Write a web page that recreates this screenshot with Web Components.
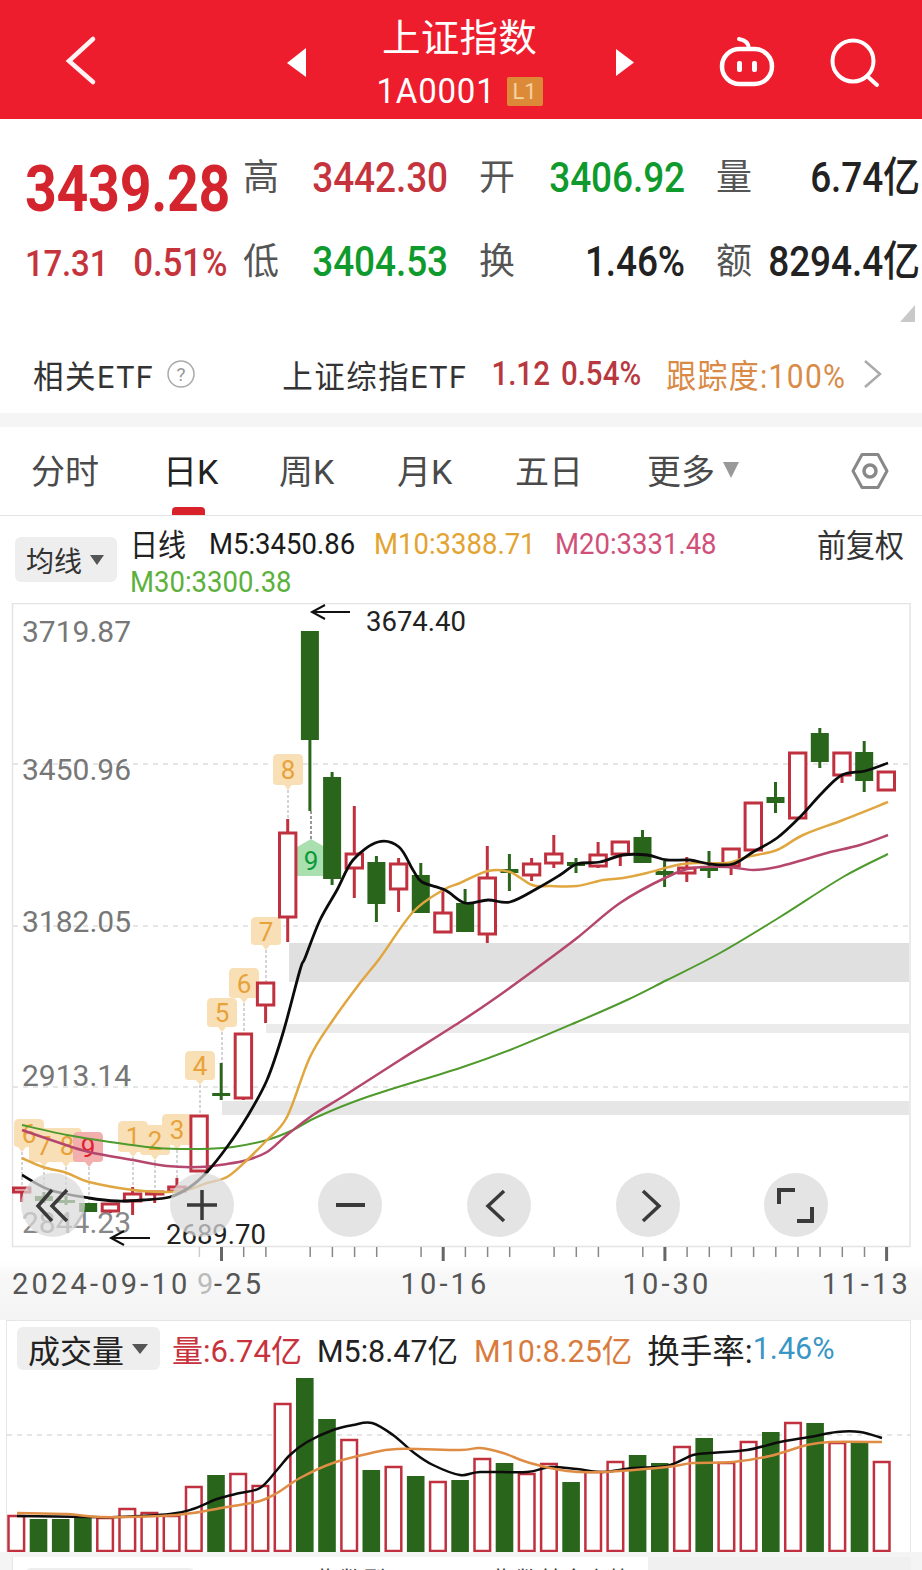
<!DOCTYPE html>
<html lang="zh"><head><meta charset="utf-8"><title>上证指数</title>
<style>
html,body{margin:0;padding:0;width:922px;height:1570px;overflow:hidden;background:#fff;font-family:Roboto,"Noto Sans CJK SC",sans-serif;}
</style></head><body>
<stock-header></stock-header>
<quote-panel></quote-panel>
<etf-row></etf-row>
<section-gap></section-gap>
<period-tabs></period-tabs>
<ma-legend></ma-legend>
<kline-chart></kline-chart>
<volume-panel></volume-panel>
<bottom-strip></bottom-strip>
<script>
const FONT='Roboto,"Noto Sans CJK SC",sans-serif';
function shell(el,html){el.attachShadow({mode:'open'}).innerHTML=html;}
const RED='#c0303f',GRN='#29651a';
function smooth(p){let d=`M${p[0][0]} ${p[0][1]}`;for(let i=0;i<p.length-1;i++){const a=p[Math.max(i-1,0)],b=p[i],c=p[i+1],e=p[Math.min(i+2,p.length-1)];
d+=`C${(b[0]+(c[0]-a[0])/6).toFixed(1)} ${(b[1]+(c[1]-a[1])/6).toFixed(1)} ${(c[0]-(e[0]-b[0])/6).toFixed(1)} ${(c[1]-(e[1]-b[1])/6).toFixed(1)} ${c[0]} ${c[1]}`;}return d;}

customElements.define('stock-header',class extends HTMLElement{connectedCallback(){shell(this,`<style>
:host{display:flex;height:119px;background:#ee1d2e;color:#fff;align-items:flex-start;position:relative}
svg{display:block;flex:none}
.mid{width:305px;display:flex;flex-direction:column;align-items:center}
.t{font-size:38.500px;line-height:42px;margin-top:17px;letter-spacing:.2px;transform:scaleY(.98)}
.s{display:flex;align-items:center;margin-top:17px;height:30px}
.c{font-size:33px;letter-spacing:.8px;line-height:30px;transform:scaleY(1.08)}
.b{margin-left:11px;width:36px;height:29px;background:#dc8a38;color:#f6d3a2;font-size:22px;line-height:29px;text-align:center;border-radius:2px}
</style>
<svg width="310" height="119" viewBox="0 0 310 119" style="margin-right:-2px"><path d="M93 39 69 61 93 82" fill="none" stroke="#fff" stroke-width="4.500" stroke-linecap="round" stroke-linejoin="miter" opacity=".95"/><path d="M287 63 306 48V77Z" fill="#fff"/></svg>
<div class="mid" style="margin-left:-1px"><div class="t">上证指数</div><div class="s"><span class="c">1A0001</span><span class="b">L1</span></div></div>
<svg width="310" height="119" viewBox="612 0 310 119"><path d="M616 49 634 62.500 616 76Z" fill="#fff"/>
<rect x="722" y="49" width="50" height="35" rx="17.500" fill="none" stroke="#fff" stroke-width="4.500"/>
<path d="M749 49C749 43 745 40 739 39" fill="none" stroke="#fff" stroke-width="4" stroke-linecap="round"/><rect x="737" y="61" width="5" height="11" rx="2" fill="#fff"/><rect x="752" y="61" width="5" height="11" rx="2" fill="#fff"/>
<circle cx="853" cy="61" r="20.500" fill="none" stroke="#fff" stroke-width="4"/><path d="M867 76 877 85" stroke="#fff" stroke-width="4" stroke-linecap="round"/></svg>`);}});

customElements.define('quote-panel',class extends HTMLElement{connectedCallback(){
const cell=(l,v,c)=>`<div class="cell"><span class="l">${l}</span><span class="v" style="color:${c}">${v}</span></div>`;
const R='#c5343d',G='#0f9a2d',K='#222';
shell(this,`<style>
:host{display:block;height:216px;box-sizing:border-box;padding:39px 0 0 25px;position:relative}
.g{display:grid;grid-template-columns:218px 205px 237px 236px;grid-auto-rows:84px}
.big{font-size:55.500px;font-weight:700;color:#d4252f;line-height:84px;height:84px;letter-spacing:-.3px;transform:scaleY(1.18);transform-origin:0 50%;margin-top:-10px}
.sm{display:flex;gap:25px;color:${R};font-weight:500;line-height:50px;height:50px;align-items:center;transform:scaleY(1.12);letter-spacing:-.2px;margin-top:-3px}
.sm span:first-child{font-size:33px}.sm span:last-child{font-size:35px}
.cell{display:flex;justify-content:space-between;align-items:center;height:40px;align-self:start}
.l{font-size:36px;color:#555;line-height:40px}
.v{font-size:37px;font-weight:500;line-height:40px;transform:scaleY(1.13);letter-spacing:-.1px}
.b{margin-left:31px;width:206px}.c{margin-left:31px;width:204px}
.tri{position:absolute;right:7px;top:186px}
</style><div class="g">
<div class="big">3439.28</div>
<div>${cell('高','3442.30',R)}</div><div class="b">${cell('开','3406.92',G)}</div><div class="c">${cell('量','6.74亿',K)}</div>
<div class="sm"><span>17.31</span><span>0.51%</span></div>
<div>${cell('低','3404.53',G)}</div><div class="b">${cell('换','1.46%',K)}</div><div class="c">${cell('额','8294.4亿',K)}</div>
</div><svg class="tri" width="15" height="17" viewBox="0 0 15 17"><path d="M15 0V17H0Z" fill="#c9c9c9"/></svg>`);
}});

customElements.define('etf-row',class extends HTMLElement{connectedCallback(){shell(this,`<style>
:host{display:flex;height:78px;align-items:center;box-sizing:border-box;padding-left:33px;font-size:31px;color:#333;white-space:nowrap}
.n{font-size:30.500px;letter-spacing:1.500px;transform:scaleY(1.05)}
.num{font-size:29.500px;transform:scaleY(1.1);font-weight:500}
svg{display:block;flex:none}
</style><span class="n">相关ETF</span>
<svg width="28" height="28" viewBox="0 0 28 28" style="margin-left:13px"><circle cx="14" cy="14" r="13" fill="none" stroke="#aaa" stroke-width="1.500"/><text x="14" y="21" text-anchor="middle" font-size="19" fill="#999" font-family="Roboto">?</text></svg>
<span class="n" style="margin-left:87px">上证综指ETF</span>
<span class="num" style="margin-left:24px;color:#b8383f">1.12</span><span class="num" style="margin-left:11px;color:#b8383f">0.54%</span>
<span class="num" style="margin-left:25px;color:#d98b46;font-weight:400;font-size:30px;letter-spacing:1.300px">跟踪度:100%</span>
<svg width="20" height="30" viewBox="0 0 20 30" style="margin-left:16px"><path d="M3 2 18 15 3 28" fill="none" stroke="#aaa" stroke-width="2.500"/></svg>`);}});

customElements.define('section-gap',class extends HTMLElement{connectedCallback(){shell(this,`<style>:host{display:block;height:14px;background:#f5f5f5}</style>`);}});

customElements.define('period-tab',class extends HTMLElement{connectedCallback(){shell(this,`<style>
:host{display:block;position:relative;font-size:34px;line-height:90px;height:88px;color:#4a4a4a;white-space:nowrap}
:host([active]){color:#222}
:host([active])::after{content:"";position:absolute;left:9px;bottom:0;width:33px;height:8px;background:#d9212c;border-radius:4px 4px 0 0}
</style><slot></slot>`);}});

customElements.define('period-tabs',class extends HTMLElement{connectedCallback(){shell(this,`<style>
:host{display:grid;grid-template-columns:132px 116px 118px 118px 132px 203px 40px;height:89px;box-sizing:border-box;padding-left:31px;border-bottom:1px solid #e4e4e4;align-items:stretch}
.m{display:flex;align-items:center}
svg{display:block}
.g{align-self:center}
</style><period-tab>分时</period-tab><period-tab active>日K</period-tab><period-tab>周K</period-tab><period-tab>月K</period-tab><period-tab>五日</period-tab>
<div class="m"><period-tab>更多</period-tab><svg width="18" height="16" viewBox="0 0 18 16" style="margin-left:7px;margin-top:-2px"><path d="M1 0H17L9 16Z" fill="#999"/></svg></div>
<svg class="g" width="40" height="40" viewBox="0 0 40 40"><path d="M3 20 12 3.500H28L37 20 28 36.500H12Z" fill="none" stroke="#888" stroke-width="3" stroke-linejoin="round"/><circle cx="20" cy="20" r="6" fill="none" stroke="#888" stroke-width="3.500"/></svg>`);}});

customElements.define('ma-legend',class extends HTMLElement{connectedCallback(){shell(this,`<style>
:host{display:grid;grid-template-columns:115px 1fr;height:87px;box-sizing:border-box;padding-left:15px;white-space:nowrap}
.pill{margin-top:21px;width:102px;height:45px;background:#eee;border-radius:6px;display:flex;align-items:center;font-size:28px;color:#333;box-sizing:border-box;padding-left:11px;gap:8px}
.rows{display:flex;flex-direction:column}
.r{display:flex;height:38px;align-items:center;font-size:27.500px;margin-top:8px}
.r+.r{margin-top:0}
span{display:block;transform:scaleY(1.1)}
.z{font-size:28px;color:#222;width:79px}
.f{font-size:29px;color:#333;margin-left:auto;margin-right:18px}
</style><div class="pill">均线<svg width="14" height="10" viewBox="0 0 14 10"><path d="M0 0H14L7 10Z" fill="#555"/></svg></div>
<div class="rows"><div class="r"><span class="z">日线</span><span style="color:#1a1a1a;width:165px">M5:3450.86</span><span style="color:#e3a330;width:181px">M10:3388.71</span><span style="color:#d0507a">M20:3331.48</span><span class="f">前复权</span></div>
<div class="r"><span style="color:#5cb13c">M30:3300.38</span></div></div>`);}});

customElements.define('chart-btn',class extends HTMLElement{connectedCallback(){shell(this,`<style>
:host{position:absolute;left:var(--x);top:var(--y);width:64px;height:64px;border-radius:50%;background:rgba(218,218,218,.72);display:block}
::slotted(svg){display:block}
</style><slot></slot>`);}});

customElements.define('kline-chart',class extends HTMLElement{connectedCallback(){
const X=i=>21.7+22.17*i;
const C=[['r',1187,1192,1187,1202],['g',1196,1201,1192,1203],['g',1200,1203,1196,1205],['g',1203,1212,1203,1212],['r',1203,1211,1203,1213],['r',1193,1201,1187,1215],['r',1191,1194,1191,1203],['r',1186,1191,1178,1191],['r',1115,1171,1115,1171],['g',1093,1096,1063,1100],['r',1033,1098,1033,1100],['r',982,1005,982,1023],['r',832,917,819,942],['g',631,740,631,811],['g',777,879,772,885],['r',853,868,806,898],['g',862,904,856,922],['r',863,889,858,912],['g',875,913,863,913],['r',912,932,890,932],['g',903,932,889,932],['r',877,934,846,943],['g',869,873,854,891],['r',863,875,858,881],['r',853,863,835,868],['g',862,866,858,873],['r',854,866,842,868],['r',841,854,841,866],['g',837,863,830,863],['g',871,875,861,887],['r',867,873,857,882],['g',868,871,851,878],['r',848,866,848,875],['r',802,850,802,850],['g',797,803,782,813],['r',752,818,752,818],['g',733,762,728,768],['r',752,775,752,783],['g',752,781,741,792],['r',771,790,771,790]];
let candles='';C.forEach((c,i)=>{const x=X(i).toFixed(1),[k,t,b,wt,wb]=c;
 const col=k=='r'?RED:GRN;
 candles+=`<path d="M${x} ${wt}V${wb}" stroke="${col}" stroke-width="3"/>`;
 candles+=k=='r'?`<rect x="${(+x-8.2).toFixed(1)}" y="${t+1}" width="16.400" height="${b-t-1}" fill="#fff" stroke="${col}" stroke-width="3"/>`:`<rect x="${(+x-9).toFixed(1)}" y="${t}" width="18" height="${b-t}" fill="${col}"/>`;});
const M5=[[22,1175],[50,1190],[89,1198],[117,1201],[143,1200],[170,1197],[190,1187],[207,1172],[227,1147],[247,1117],[267,1080],[283,1033],[300,970],[305,958],[320,920],[337,890],[353,860],[378,842],[399,847],[413,870],[422,882],[445,890],[465,903],[488,900],[510,902],[538,888],[560,875],[577,864],[600,862],[623,855],[647,855],[667,860],[690,860],[710,864],[733,864],[753,852],[777,838],[800,817],[822,793],[842,775],[865,771],[888,763]];
const M10=[[22,1158],[43,1167],[67,1173],[89,1182],[133,1190],[167,1192],[187,1190],[207,1183],[227,1177],[247,1160],[267,1140],[287,1117],[310,1057],[333,1020],[360,983],[380,958],[413,912],[443,890],[460,883],[488,871],[510,872],[532,885],[550,886],[577,886],[603,880],[623,878],[647,873],[677,865],[700,863],[727,863],[747,857],[777,850],[803,835],[843,820],[888,802]];
const M20=[[22,1130],[60,1143],[89,1152],[133,1160],[167,1166],[200,1167],[227,1164],[247,1160],[267,1152],[287,1135],[313,1115],[347,1094],[400,1060],[460,1022],[497,997],[537,968],[577,938],[620,903],[667,877],[693,868],[727,867],[753,870],[777,867],[803,860],[827,853],[860,845],[888,835]];
const M30=[[22,1125],[67,1135],[110,1142],[157,1148],[200,1149],[233,1147],[267,1140],[293,1130],[317,1117],[367,1097],[460,1068],[510,1050],[577,1022],[627,1000],[667,980],[720,953],[780,917],[843,877],[888,854]];
const line=(p,c,w)=>`<path d="${smooth(p)}" fill="none" stroke="${c}" stroke-width="${w}"/>`;
const B=[['8',67,1128,1167,1201,66],['7',44,1128,1167,1195,44],['6',29,1119,1152,1187,22],['1',133,1121,1157,1187,133],['2',155,1125,1160,1190,155],['3',177,1114,1150,1178,177],['4',200,1051,1085,1115,200],['5',222,998,1032,1063,222],['6',244,968,1003,1033,244],['7',266,917,950,982,266],['8',288,754,790,819,288]];
const badge=(d,cx,t,tip,end,tx,fill,col)=>{const l=cx-15,r=cx+15,bt=tip-5;
 return `<path d="M${tx} ${tip}V${end}" stroke="#aaa" stroke-width="1" stroke-dasharray="3 2"/><path d="M${l+5} ${t}H${r-5}Q${r} ${t} ${r} ${t+5}V${bt-3}Q${r} ${bt} ${r-4} ${bt}L${tx+4} ${bt}L${tx} ${tip}L${tx-4} ${bt}L${l+4} ${bt}Q${l} ${bt} ${l} ${bt-3}V${t+5}Q${l} ${t} ${l+5} ${t}Z" fill="${fill}"/><text x="${cx}" y="${(t+bt)/2+9.500}" text-anchor="middle" font-size="26" fill="${col}">${d}</text>`;};
let badges='';B.forEach(b=>badges+=badge(...b,'#f9dfb6','#e8a23a'));
badges+=badge('9',88,1132,1167,1203,89,'#f3aeae','#e0202f');
badges+=`<path d="M311 811V839" stroke="#777" stroke-width="1.500" stroke-dasharray="3 2"/><path d="M311 839 325 847V876H297V847Z" fill="#aadfb0"/><text x="311" y="870" text-anchor="middle" font-size="26" fill="#0b9a3a">9</text>`;
let ticks='';for(let i=8;i<40;i++){if([12,17,23,27].includes(i))continue;const long=(i-9)%10==0;const x=(22+22.17*i).toFixed(1);ticks+=`<path d="M${x} 1247V${long?1261:1257}" stroke="${i==8?'#ccc':long?'#666':'#888'}" stroke-width="${long?3:1.500}"/>`;}
const ax=(t,y,c='#777')=>`<text x="22" y="${y}" font-size="30" fill="${c}">${t}</text>`;
const dash=y=>`<path d="M13 ${y}H909" stroke="#ddd" stroke-width="1.500" stroke-dasharray="5 5"/>`;
const date=(t,x,a,fill='#555')=>`<text x="${x}" y="1294" text-anchor="${a}" font-size="29" letter-spacing="3.200" fill="${fill}">${t}</text>`;
const btn=(cx,inner)=>`<chart-btn style="--x:${cx-32}px;--y:570px"><svg width="64" height="64" viewBox="0 0 64 64" fill="none" stroke="#3a3a3a" stroke-width="3.500">${inner}</svg></chart-btn>`;
shell(this,`<style>
:host{display:block;position:relative;height:717px;width:922px;overflow:hidden}
svg.m{display:block;font-family:${FONT}}
</style><svg class="m" width="922" height="717" viewBox="0 603 922 717">
<defs><linearGradient id="sh" x1="0" y1="0" x2="0" y2="1"><stop offset="0" stop-color="#fff"/><stop offset=".2" stop-color="#f8f8f8"/><stop offset="1" stop-color="#f4f4f4"/></linearGradient></defs>
<rect x="0" y="1262" width="922" height="58" fill="url(#sh)"/>
<rect x="12.500" y="603.500" width="897.500" height="643" fill="#fff" stroke="#e4e4e4" stroke-width="1.500"/>
${dash(764)}${dash(926)}${dash(1087)}
<rect x="289" y="943" width="620" height="39" fill="#e0e0e0"/><rect x="266" y="1024" width="643" height="9" fill="#ebebeb"/><rect x="222" y="1101" width="687" height="14" fill="#e6e6e6"/>
${ax('3719.87',642)}${ax('3450.96',780)}${ax('3182.05',932)}${ax('2913.14',1086)}${ax('2844.23',1233,'#888')}
${badges}${candles}
${line(M30,'#4f9a2c',2)}${line(M20,'#b5476e',2.500)}${line(M10,'#e0a63f',2.500)}${line(M5,'#0c0c0c',2.800)}
<path d="M350 612H313M325 605 312 612 325 619" fill="none" stroke="#111" stroke-width="2"/><text x="366" y="631" font-size="27.500" fill="#222">3674.40</text>
<path d="M150 1238H112M124 1231 111 1238 124 1245" fill="none" stroke="#111" stroke-width="2"/><text x="166" y="1244" font-size="27.500" fill="#222">2689.70</text>
${ticks}
${date('2024-09-10',12,'start')}${date('9',197,'start','#bbb')}${date('-25',214,'start')}${date('10-16',445,'middle')}${date('10-30',667,'middle')}${date('11-13',911,'end')}
</svg>
${btn(53,'<path d="M31 17 17 33 31 48M46 17 31 33 46 48"/>')}${btn(202,'<path d="M17 32H47M32 17V47"/>')}${btn(350,'<path d="M18 32H47" stroke-width="4"/>')}${btn(499,'<path d="M37 18 21 33 37 48"/>')}${btn(648,'<path d="M27 18 43 33 27 48"/>')}${btn(796,'<path d="M15 31V17H31M33 48H48V34" stroke-width="4"/>')}`);
}});

customElements.define('volume-panel',class extends HTMLElement{connectedCallback(){
const T=[1516,1519,1519,1518,1518,1509,1513,1516,1487,1475,1474,1486,1404,1378,1419,1440,1470,1467,1476,1482,1480,1459,1463,1474,1464,1482,1472,1462,1455,1463,1447,1438,1463,1442,1432,1423,1423,1443,1443,1462];
const up=[1,0,0,0,1,1,1,1,1,0,1,1,1,0,0,1,0,1,0,1,0,1,0,1,1,0,1,1,0,0,1,0,1,1,0,1,0,1,0,1];
let bars='';T.forEach((t,i)=>{const x=16.3+22.19*i;bars+=up[i]?`<rect x="${(x-7.8).toFixed(1)}" y="${t}" width="15.600" height="${1551-t}" fill="#fff" stroke="${RED}" stroke-width="2.500"/>`:`<rect x="${(x-8.8).toFixed(1)}" y="${t}" width="17.600" height="${1552-t}" fill="${GRN}"/>`;});
const A=[[17,1516],[90,1517],[117,1517],[170,1514],[193,1509],[217,1499],[240,1493],[260,1488],[277,1470],[290,1455],[307,1442],[333,1430],[353,1425],[372,1423],[393,1435],[413,1452],[433,1465],[460,1475],[480,1472],[527,1472],[550,1467],[577,1469],[603,1472],[633,1468],[667,1466],[693,1455],[710,1453],[747,1450],[780,1442],[810,1437],[837,1432],[860,1432],[882,1438]];
const O=[[17,1513],[67,1514],[100,1517],[160,1516],[193,1513],[227,1507],[260,1501],[277,1493],[300,1478],[333,1463],[367,1454],[397,1449],[460,1450],[480,1448],[503,1453],[530,1463],[567,1471],[603,1472],[667,1467],[693,1463],[733,1462],[770,1456],[807,1445],[830,1442],[882,1442]];
shell(this,`<style>
:host{display:block;box-sizing:border-box;margin-left:6px;width:905px;height:232px;border:1px solid #e6e6e6;border-bottom:none;background:#fff;white-space:nowrap}
.h{display:flex;align-items:center;height:55px;font-size:30.500px;color:#222}
.p{margin-left:10px;width:143px;height:43px;box-sizing:border-box;background:#eee;border-radius:6px;display:flex;align-items:center;padding-left:11px;gap:8px;font-size:32px;flex:none}
.q{font-size:32.500px}
svg.c{display:block}
</style><div class="h"><div class="p">成交量<svg width="16" height="10" viewBox="0 0 16 10"><path d="M0 0H16L8 10Z" fill="#555"/></svg></div>
<span style="margin-left:12px;color:#c8323c;font-size:31px">量:6.74亿</span><span style="margin-left:15px">M5:8.47亿</span><span style="margin-left:16px;color:#d97b3d">M10:8.25亿</span><span class="q" style="margin-left:15px">换手率:</span><span style="color:#3a96c4">1.46%</span></div>
<svg class="c" width="903" height="176" viewBox="7 1376 903 176">
<path d="M7 1435H910" stroke="#ddd" stroke-width="1.500" stroke-dasharray="5 5"/>
${bars}
<path d="${smooth(A)}" fill="none" stroke="#0c0c0c" stroke-width="2.500"/><path d="${smooth(O)}" fill="none" stroke="#df8d45" stroke-width="2.500"/></svg>`);}});

customElements.define('bottom-strip',class extends HTMLElement{connectedCallback(){shell(this,`<style>
:host{display:block;height:18px;background:#f4f4f4;padding-top:5px;box-sizing:border-box;overflow:hidden}
.b{display:flex;height:20px;margin-left:12px;width:898px;background:#fff;border-left:1px solid #e6e6e6;font-size:23px;color:#333;line-height:31px;white-space:nowrap}
.b span{margin-top:8px}
.p{margin:11px 0 0 12px;width:170px;height:20px;background:#eee;border-radius:6px 6px 0 0;flex:none}
.g{width:263px;background:#f0f0f0;margin-left:auto}
</style><div class="b"><div class="p"></div><span style="margin-left:122px">指数型</span><span style="margin-left:107px">指数基金走势</span><div class="g"></div></div>`);}});
</script>
</body></html>
